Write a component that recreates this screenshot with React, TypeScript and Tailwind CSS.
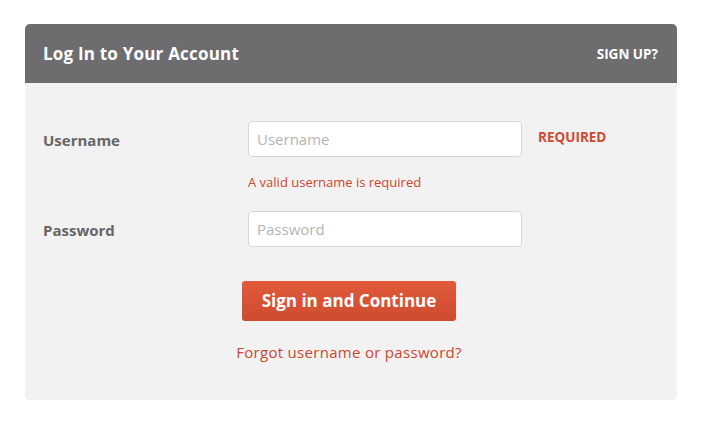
import React from 'react';

const App: React.FC = () => {
  return (
    <div className="min-h-screen bg-white pt-6 pl-[25px] font-['Open_Sans','Lato',sans-serif]">
      <div className="w-[652px] rounded-[5px] overflow-hidden bg-[#f2f2f2]">
        {/* Header */}
        <div className="h-[59px] bg-[#6d6d6f] flex items-center justify-between pl-[18px] pr-[19px]">
          <h1 className="text-white text-[17px] leading-[22px] font-bold tracking-[0.2px]">Log In to Your Account</h1>
          <span className="text-white text-[13.5px] leading-[18px] font-bold">SIGN UP?</span>
        </div>

        {/* Form */}
        <div className="pt-[38px] pb-[38px]">
          <div className="flex items-start">
            <label className="w-[223px] pl-[18px] pt-[9px] text-[15px] leading-[20px] font-bold text-[#666]">Username</label>
            <div>
              <input
                type="text"
                placeholder="Username"
                className="block w-[274px] h-[36px] bg-white border border-[#d6d6d6] rounded-[4px] px-2 text-[15px] text-[#555] placeholder:text-[#b5b5b5] outline-none"
              />
              <p className="mt-[17px] text-[13px] leading-[16px] text-[#c9472f]">A valid username is required</p>
            </div>
            <span className="ml-[16px] pt-[8px] text-[13.5px] leading-[16px] font-bold text-[#cf4a32]">REQUIRED</span>
          </div>

          <div className="flex items-start mt-[21px]">
            <label className="w-[223px] pl-[18px] pt-[9px] text-[15px] leading-[20px] font-bold text-[#666]">Password</label>
            <input
              type="password"
              placeholder="Password"
              className="block w-[274px] h-[36px] bg-white border border-[#d6d6d6] rounded-[4px] px-2 text-[15px] text-[#555] placeholder:text-[#b5b5b5] outline-none"
            />
          </div>

          <div className="flex flex-col items-center mt-[34px] pr-[4px]">
            <button className="w-[214px] h-[40px] rounded-[3px] bg-gradient-to-b from-[#e15b3b] to-[#cf4b2f] text-white text-[17px] leading-[22px] font-bold">
              Sign in and Continue
            </button>
            <a className="mt-[21px] text-[15px] leading-[20px] tracking-[0.3px] text-[#c9472f]">Forgot username or password?</a>
          </div>
        </div>
      </div>
    </div>
  );
};

export default App;
